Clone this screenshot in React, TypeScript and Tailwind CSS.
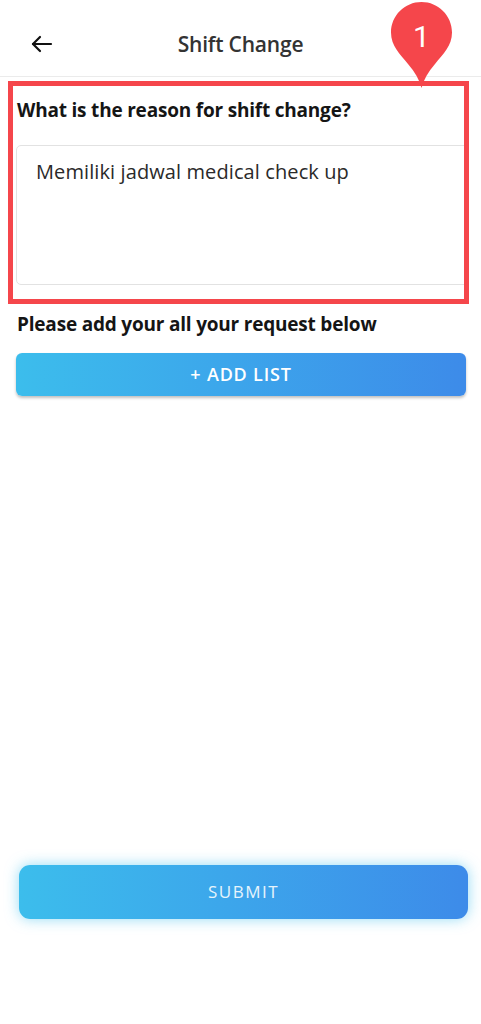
import React from "react";

function BackArrow() {
  return (
    <svg width="24" height="24" viewBox="0 0 24 24" fill="none" stroke="#111" strokeWidth="2.2" strokeLinecap="round" strokeLinejoin="round">
      <path d="M21 12H3" />
      <path d="M10 5l-7 7 7 7" />
    </svg>
  );
}

function Pin() {
  return (
    <div className="absolute left-[391px] top-[2px] w-[61px] h-[87px]">
      <svg width="61" height="87" viewBox="0 0 61 87">
        <path
          d="M30.5 0 C47.3 0 61 13.6 61 30.5 C61 44 52 52 44 62 C37 70 32.5 78 30.5 86 C28.5 78 24 70 17 62 C9 52 0 44 0 30.5 C0 13.6 13.7 0 30.5 0 Z"
          fill="#f5464b"
        />
      </svg>
      <div className="absolute left-0 top-[16px] w-[61px] text-center text-white text-[30px] leading-[38px] font-['Roboto',sans-serif]">
        1
      </div>
    </div>
  );
}

export default function App() {
  return (
    <div className="relative w-[481px] h-[1024px] bg-white font-['Open_Sans',sans-serif] overflow-hidden flex flex-col">
      <div className="h-[77px] pt-[11px] flex items-center border-b border-[#ebebeb] pl-[30px] pr-[54px]">
        <BackArrow />
        <div className="flex-1 text-center text-[21px] leading-[30px] text-[#333] font-semibold tracking-[-0.2px]">
          Shift Change
        </div>
      </div>
      <div className="ml-[8px] mt-[4px] w-[461px] h-[223px] border-[5px] border-[#f5464b] pl-[3px] overflow-hidden flex flex-col">
        <div className="mt-[10px] text-[19px] leading-[28px] font-bold text-[#151515] pl-[1px] tracking-[-0.2px]">
          What is the reason for shift change?
        </div>
        <div className="mt-[21px] h-[140px] w-[460px] border border-[#e2e2e2] rounded-[5px] pl-[19px] pt-[12px] text-[20px] leading-[28px] text-[#2a2a2a] tracking-[0.1px]">
          Memiliki jadwal medical check up
        </div>
      </div>
      <div className="ml-[17px] mt-[6px] text-[19px] leading-[28px] font-bold text-[#151515] tracking-[-0.2px]">
        Please add your all your request below
      </div>
      <div className="ml-[16px] mt-[15px] w-[450px] h-[43px] rounded-[6px] bg-gradient-to-r from-[#3cbdec] to-[#3d8be9] shadow-[0_2px_3px_rgba(0,0,0,0.25)] flex items-center justify-center text-white text-[18px] font-semibold tracking-[0.8px]">
        + ADD LIST
      </div>
      <div className="ml-[19px] mt-auto mb-[105px] w-[449px] h-[54px] rounded-[11px] bg-gradient-to-r from-[#3cbdec] to-[#3d8be9] shadow-[0_0_14px_rgba(61,189,236,0.55)] flex items-center justify-center text-[#e6f4fc] text-[17px] tracking-[1.5px]">
        SUBMIT
      </div>
      <Pin />
    </div>
  );
}
